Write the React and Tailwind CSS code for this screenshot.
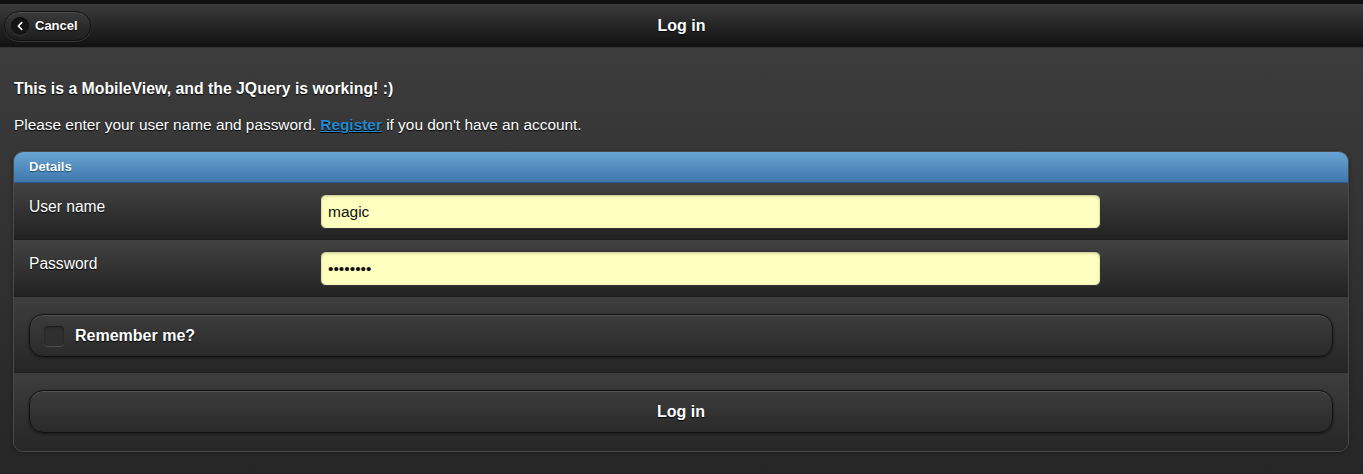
import { FaChevronLeft } from "react-icons/fa";

const font = { fontFamily: '"Liberation Sans", Arial, Helvetica, sans-serif' };

export default function App() {
  return (
    <div className="w-[1363px] h-[474px] flex flex-col overflow-hidden bg-[#111]" style={font}>
      {/* Header */}
      <div className="mt-[4px] h-[44px] shrink-0 relative flex items-center justify-center bg-gradient-to-b from-[#3c3c3c] to-[#111] border-b border-[#333]">
        <button className="absolute left-[4px] top-[7px] h-[30px] pl-[6px] pr-[12px] flex items-center gap-[6px] rounded-full border border-[#111] bg-gradient-to-b from-[#3a3a3a] to-[#1e1e1e] shadow-[0_1px_0_rgba(255,255,255,0.15),inset_0_1px_0_rgba(255,255,255,0.1)]">
          <span className="w-[18px] h-[18px] rounded-full bg-[#151515] flex items-center justify-center shadow-[inset_0_1px_2px_rgba(0,0,0,0.6),0_1px_0_rgba(255,255,255,0.1)]">
            <FaChevronLeft className="text-white w-[10px] h-[10px] -ml-[1px]" />
          </span>
          <span className="text-white font-bold text-[13px] [text-shadow:0_1px_1px_#000]">Cancel</span>
        </button>
        <h1 className="text-white font-bold text-[16px] [text-shadow:0_1px_1px_#000]">Log in</h1>
      </div>

      {/* Content */}
      <div className="flex-1 bg-gradient-to-b from-[#3c3c3c] to-[#262626] px-[14px] pt-[32px]">
        <p className="text-white font-bold text-[15.8px] leading-[18px] [text-shadow:0_1px_1px_#000]">
          This is a MobileView, and the JQuery is working! :)
        </p>
        <p className="text-white text-[15.4px] leading-[18px] mt-[18px] [text-shadow:0_1px_1px_#000]">
          Please enter your user name and password.{" "}
          <a href="#" className="text-[#2489ce] font-bold underline">Register</a> if you don't have an account.
        </p>

        <div className="mt-[17px] -ml-[1px] w-[1336px] rounded-[10px] border border-[#4a4a4a] overflow-hidden shadow-[0_1px_4px_rgba(0,0,0,0.3)]">
          <div className="h-[31px] flex items-center px-[15px] bg-gradient-to-b from-[#68a5d3] to-[#3f77ad] border-b border-[#2a5a8a]">
            <span className="text-white font-bold text-[13px] [text-shadow:0_1px_1px_#145072]">Details</span>
          </div>

          <div className="h-[57px] flex bg-gradient-to-b from-[#434343] to-[#222] border-b border-[#1e1e1e]">
            <label className="w-[306px] pl-[15px] pt-[12px] text-white text-[15.6px] [text-shadow:0_1px_1px_#000]">User name</label>
            <div className="pt-[11px]">
              <input
                type="text"
                defaultValue="magic"
                className="w-[781px] h-[35px] rounded-[6px] bg-[#ffffc0] border border-[#333] px-[7px] text-[15.5px] text-[#111] outline-none shadow-[inset_0_1px_3px_rgba(0,0,0,0.25)]"
                style={font}
              />
            </div>
          </div>

          <div className="h-[57px] flex bg-gradient-to-b from-[#434343] to-[#222] border-b border-[#1e1e1e]">
            <label className="w-[306px] pl-[15px] pt-[12px] text-white text-[15.6px] [text-shadow:0_1px_1px_#000]">Password</label>
            <div className="pt-[11px]">
              <input
                type="password"
                defaultValue="12345678"
                className="w-[781px] h-[35px] rounded-[6px] bg-[#ffffc0] border border-[#333] px-[7px] text-[15.5px] text-[#111] outline-none shadow-[inset_0_1px_3px_rgba(0,0,0,0.25)]"
                style={font}
              />
            </div>
          </div>

          <div className="h-[76px] px-[15px] pt-[17px] bg-gradient-to-b from-[#3e3e3e] to-[#262626] border-b border-[#1e1e1e]">
            <div className="h-[43px] flex items-center gap-[11px] pl-[14px] rounded-[14px] border border-[#111] bg-gradient-to-b from-[#3c3c3c] to-[#2a2a2a] shadow-[0_1px_3px_rgba(0,0,0,0.5),inset_0_1px_0_rgba(255,255,255,0.12)]">
              <span className="w-[20px] h-[20px] rounded-[4px] bg-[#2f2f2f] shadow-[inset_0_1px_2px_rgba(0,0,0,0.5),0_1px_0_rgba(255,255,255,0.15)]" />
              <span className="text-white font-bold text-[16px] [text-shadow:0_1px_1px_#000]">Remember me?</span>
            </div>
          </div>

          <div className="h-[78px] px-[15px] pt-[17px] bg-gradient-to-b from-[#3e3e3e] to-[#262626]">
            <button className="w-full h-[43px] flex items-center justify-center rounded-[14px] border border-[#111] bg-gradient-to-b from-[#3c3c3c] to-[#2a2a2a] shadow-[0_1px_3px_rgba(0,0,0,0.5),inset_0_1px_0_rgba(255,255,255,0.12)]">
              <span className="text-white font-bold text-[16px] [text-shadow:0_1px_1px_#000]">Log in</span>
            </button>
          </div>
        </div>
      </div>
    </div>
  );
}
